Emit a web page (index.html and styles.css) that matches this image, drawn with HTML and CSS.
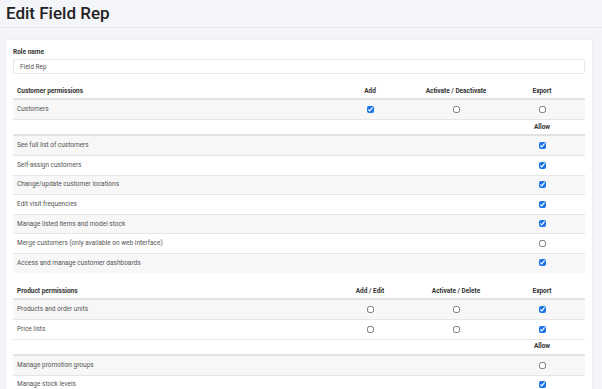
FILE: index.html
```html
<!DOCTYPE html>
<html>
<head>
  <title>Edit Field Rep</title>
  <link rel="stylesheet" href="styles.css">
</head>
<body>
  <div class="page-header">
    <h1>Edit Field Rep</h1>
  </div>

  <div class="card">
    <label class="field-label" for="role">Role name</label>
    <input class="field-input" type="text" id="role" value="Field Rep">

    <table class="perm-table">
      <thead>
        <tr>
          <th class="name-col">Customer permissions</th>
          <th>Add</th>
          <th>Activate / Deactivate</th>
          <th>Export</th>
        </tr>
      </thead>
      <tbody>
        <tr>
          <td class="name-col">Customers</td>
          <td><input type="checkbox" checked></td>
          <td><input type="checkbox"></td>
          <td><input type="checkbox"></td>
        </tr>
      </tbody>
      <thead>
        <tr>
          <th class="name-col"></th>
          <th></th>
          <th></th>
          <th>Allow</th>
        </tr>
      </thead>
      <tbody>
        <tr>
          <td class="name-col">See full list of customers</td>
          <td></td><td></td>
          <td><input type="checkbox" checked></td>
        </tr>
        <tr>
          <td class="name-col">Self-assign customers</td>
          <td></td><td></td>
          <td><input type="checkbox" checked></td>
        </tr>
        <tr>
          <td class="name-col">Change/update customer locations</td>
          <td></td><td></td>
          <td><input type="checkbox" checked></td>
        </tr>
        <tr>
          <td class="name-col">Edit visit frequencies</td>
          <td></td><td></td>
          <td><input type="checkbox" checked></td>
        </tr>
        <tr>
          <td class="name-col">Manage listed items and model stock</td>
          <td></td><td></td>
          <td><input type="checkbox" checked></td>
        </tr>
        <tr>
          <td class="name-col">Merge customers (only available on web interface)</td>
          <td></td><td></td>
          <td><input type="checkbox"></td>
        </tr>
        <tr>
          <td class="name-col">Access and manage customer dashboards</td>
          <td></td><td></td>
          <td><input type="checkbox" checked></td>
        </tr>
      </tbody>
    </table>

    <table class="perm-table">
      <thead>
        <tr>
          <th class="name-col">Product permissions</th>
          <th>Add / Edit</th>
          <th>Activate / Delete</th>
          <th>Export</th>
        </tr>
      </thead>
      <tbody>
        <tr>
          <td class="name-col">Products and order units</td>
          <td><input type="checkbox"></td>
          <td><input type="checkbox"></td>
          <td><input type="checkbox" checked></td>
        </tr>
        <tr>
          <td class="name-col">Price lists</td>
          <td><input type="checkbox"></td>
          <td><input type="checkbox"></td>
          <td><input type="checkbox" checked></td>
        </tr>
      </tbody>
      <thead>
        <tr>
          <th class="name-col"></th>
          <th></th>
          <th></th>
          <th>Allow</th>
        </tr>
      </thead>
      <tbody>
        <tr>
          <td class="name-col">Manage promotion groups</td>
          <td></td><td></td>
          <td><input type="checkbox"></td>
        </tr>
        <tr>
          <td class="name-col">Manage stock levels</td>
          <td></td><td></td>
          <td><input type="checkbox" checked></td>
        </tr>
      </tbody>
    </table>
  </div>
</body>
</html>
```

FILE: styles.css
```css
body {
  margin: 0;
  font-family: Roboto, "Liberation Sans", Arial, sans-serif;
  background-color: #f4f5f9;
  color: #555;
}

.page-header {
  height: 27px;
  padding-left: 6px;
  border-bottom: 1px solid #e9eaef;
}

.page-header h1 {
  margin: 0;
  font-size: 17px;
  font-weight: 500;
  line-height: 27px;
  color: #222;
}

.card {
  margin: 12px 10px 0 6px;
  padding: 8px 7px 0 7px;
  background-color: #fff;
  box-shadow: 0 0 2px rgba(0, 0, 0, 0.06);
}

.field-label {
  display: block;
  font-size: 6.5px;
  font-weight: bold;
  color: #333;
  line-height: 9px;
}

.field-input {
  display: block;
  box-sizing: border-box;
  width: 100%;
  height: 15px;
  margin: 2px 0 10px 0;
  padding: 0 6px;
  font-family: inherit;
  font-size: 6.5px;
  color: #555;
  border: 1px solid #e8e8e8;
  border-radius: 2px;
  outline: none;
}

.perm-table {
  width: 100%;
  table-layout: fixed;
  border-collapse: collapse;
  font-size: 6.5px;
  margin-bottom: 11.5px;
}

.perm-table th,
.perm-table td {
  padding: 4.8px 4px;
  line-height: 9px;
  text-align: center;
  border-top: 1px solid #e6e6e6;
}

.perm-table th {
  padding-top: 2.7px;
  padding-bottom: 2.7px;
  font-weight: bold;
  color: #333;
  border-bottom: 2px solid #e2e2e2;
  width: 78px;
}

.perm-table thead:first-child th {
  border-top: none;
}

.perm-table .name-col {
  text-align: left;
  width: auto;
}

.perm-table tbody tr:nth-child(odd) td {
  background-color: #f7f7f7;
}

.perm-table input[type="checkbox"] {
  width: 7px;
  height: 7px;
  margin: 0;
  vertical-align: middle;
  accent-color: #1a73e8;
}
```
